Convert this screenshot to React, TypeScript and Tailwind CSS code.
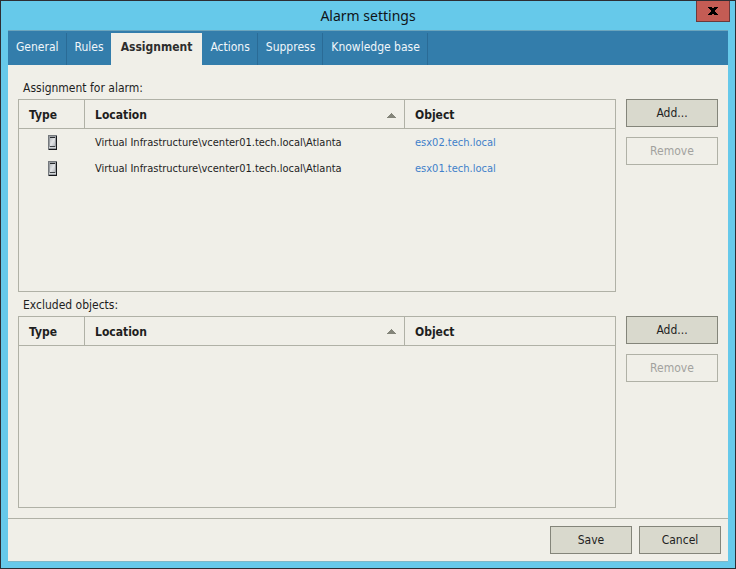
import { useState } from "react";

type Row = { location: string; object: string };

const tabs = ["General", "Rules", "Assignment", "Actions", "Suppress", "Knowledge base"];

const assigned: Row[] = [
  { location: "Virtual Infrastructure\\vcenter01.tech.local\\Atlanta", object: "esx02.tech.local" },
  { location: "Virtual Infrastructure\\vcenter01.tech.local\\Atlanta", object: "esx01.tech.local" },
];

function HostIcon() {
  return (
    <svg width="9" height="15" viewBox="0 0 9 15" shapeRendering="crispEdges" role="img" aria-label="Host" className="block">
      <defs>
        <linearGradient id="hostFace" x1="0" y1="0" x2="1" y2="1">
          <stop offset="0" stopColor="#b9bdc0" />
          <stop offset="0.5" stopColor="#e2e4e6" />
          <stop offset="1" stopColor="#b4b8bc" />
        </linearGradient>
      </defs>
      <rect width="9" height="15" fill="#74787c" />
      <rect x="8" y="1" width="1" height="14" fill="#17191c" />
      <rect x="1" y="14" width="8" height="1" fill="#17191c" />
      <rect x="1" y="1" width="7" height="13" fill="#9a9ea2" />
      <rect x="2" y="3" width="5" height="8" fill="url(#hostFace)" />
      <rect x="2" y="2" width="5" height="1" fill="#26292c" />
      <rect x="2" y="11" width="5" height="1" fill="#3f4347" />
      <rect x="1" y="12" width="7" height="1" fill="#d3d6d8" />
    </svg>
  );
}

function ObjectTable({ label, rows }: { label: string; rows: Row[] }) {
  return (
    <div className="min-w-0 flex-1 border border-[#b0b1a6]">
      <table aria-label={label} className="w-full table-fixed border-separate border-spacing-0 text-left">
        <colgroup>
          <col className="w-[66px]" />
          <col className="w-[320px]" />
          <col />
        </colgroup>
        <thead>
          <tr className="h-[29px] text-[12px] leading-4 text-[#1e1e1e]">
            <th className="border-r border-b border-[#b0b1a6] px-2.5 pt-0.5 pb-0">Type</th>
            <th aria-sort="ascending" className="border-r border-b border-[#b0b1a6] pt-0.5 pr-2 pb-0 pl-2.5">
              <span className="flex items-center justify-between">
                Location
                <svg width="9" height="5" viewBox="0 0 9 5" shapeRendering="crispEdges" aria-hidden="true">
                  <path d="M4 0h1v1h1v1h1v1h1v1h1v1H0V4h1V3h1V2h1V1h1z" fill="#84857a" />
                </svg>
              </span>
            </th>
            <th className="border-b border-[#b0b1a6] px-2.5 pt-0.5 pb-0">Object</th>
          </tr>
        </thead>
        <tbody className="text-[11px] leading-4 text-[#1e1e1e]">
          {rows.map((row) => (
            <tr key={row.object} className="h-[26px]">
              <td className="p-0">
                <div className="flex justify-center">
                  <HostIcon />
                </div>
              </td>
              <td className="px-2.5 pt-0.5 pb-0 whitespace-nowrap">{row.location}</td>
              <td className="px-2.5 pt-0.5 pb-0">
                <a href="#" className="text-[#3f7fca]">{row.object}</a>
              </td>
            </tr>
          ))}
        </tbody>
      </table>
    </div>
  );
}

function Section({ title, rows }: { title: string; rows: Row[] }) {
  return (
    <section className="flex flex-col">
      <h2 className="px-[5px] pt-0.5 text-[12px] leading-[22px] text-[#1e1e1e]">{title}</h2>
      <div className="flex flex-1 gap-2.5">
        <ObjectTable label={title} rows={rows} />
        <div className="flex w-[92px] flex-col gap-2.5">
          <button type="button" className="h-7 border border-[#84857a] bg-[#d9d9cd] text-[12px] text-[#1e1e1e]">Add...</button>
          <button type="button" disabled className="h-7 border border-[#b0b1a6] text-[12px] text-[#a2a29e]">Remove</button>
        </div>
      </div>
    </section>
  );
}

export default function App() {
  const [active, setActive] = useState("Assignment");
  return (
    <div className="flex min-h-screen flex-col border border-[#2d2d33] bg-[#66c9ea] px-[7px] pb-1.5 font-['DejaVu_Sans_Condensed','DejaVu_Sans',sans-serif]">
      <header className="relative flex h-[29px] items-center justify-center">
        <h1 className="font-['Noto_Sans','Open_Sans',sans-serif] text-[14px] leading-5 text-[#101418]">Alarm settings</h1>
        <button
          type="button"
          aria-label="Close"
          className="absolute top-0 -right-0.5 flex h-[21px] w-[34px] items-center justify-center border border-t-0 border-[#6b3a3c] bg-[#c45c54]"
        >
          <svg width="10" height="8" viewBox="0 0 10 8" shapeRendering="crispEdges" aria-hidden="true">
            <path d="M0 0h4v1h2V0h4v1H9v1H8v1H7v2h1v1h1v1h1v1H6V7H4v1H0V7h1V6h1V5h1V3H2V2H1V1H0z" fill="#000" />
          </svg>
        </button>
      </header>
      <main className="flex flex-1 flex-col border-y border-t-[#6ba5bd] border-b-[#7db8c8] bg-[#f0efe8]">
        <nav role="tablist" className="flex h-[34px] bg-[#337dab] pt-0.5 text-[12px] leading-4">
          {tabs.map((tab) => (
            <button
              key={tab}
              type="button"
              role="tab"
              aria-selected={tab === active}
              onClick={() => setActive(tab)}
              className={
                tab === active
                  ? "-ml-px flex bg-[#f0efe8] px-2.5 pt-1.5 font-bold text-[#2d2d2d]"
                  : "flex border-r border-[#2a6b96] pt-1.5 pr-[7px] pl-2 text-[#f0f6fa]"
              }
            >
              {tab}
            </button>
          ))}
        </nav>
        <div className="grid flex-1 auto-rows-fr px-2.5 py-2.5">
          <Section title="Assignment for alarm:" rows={assigned} />
          <Section title="Excluded objects:" rows={[]} />
        </div>
        <footer className="flex justify-end gap-[7px] border-t border-[#b0b1a6] p-[7px]">
          <button type="button" className="h-7 w-[82px] border border-[#84857a] bg-[#d9d9cd] text-[12px] text-[#1e1e1e]">Save</button>
          <button type="button" className="h-7 w-[82px] border border-[#84857a] bg-[#d9d9cd] text-[12px] text-[#1e1e1e]">Cancel</button>
        </footer>
      </main>
    </div>
  );
}
